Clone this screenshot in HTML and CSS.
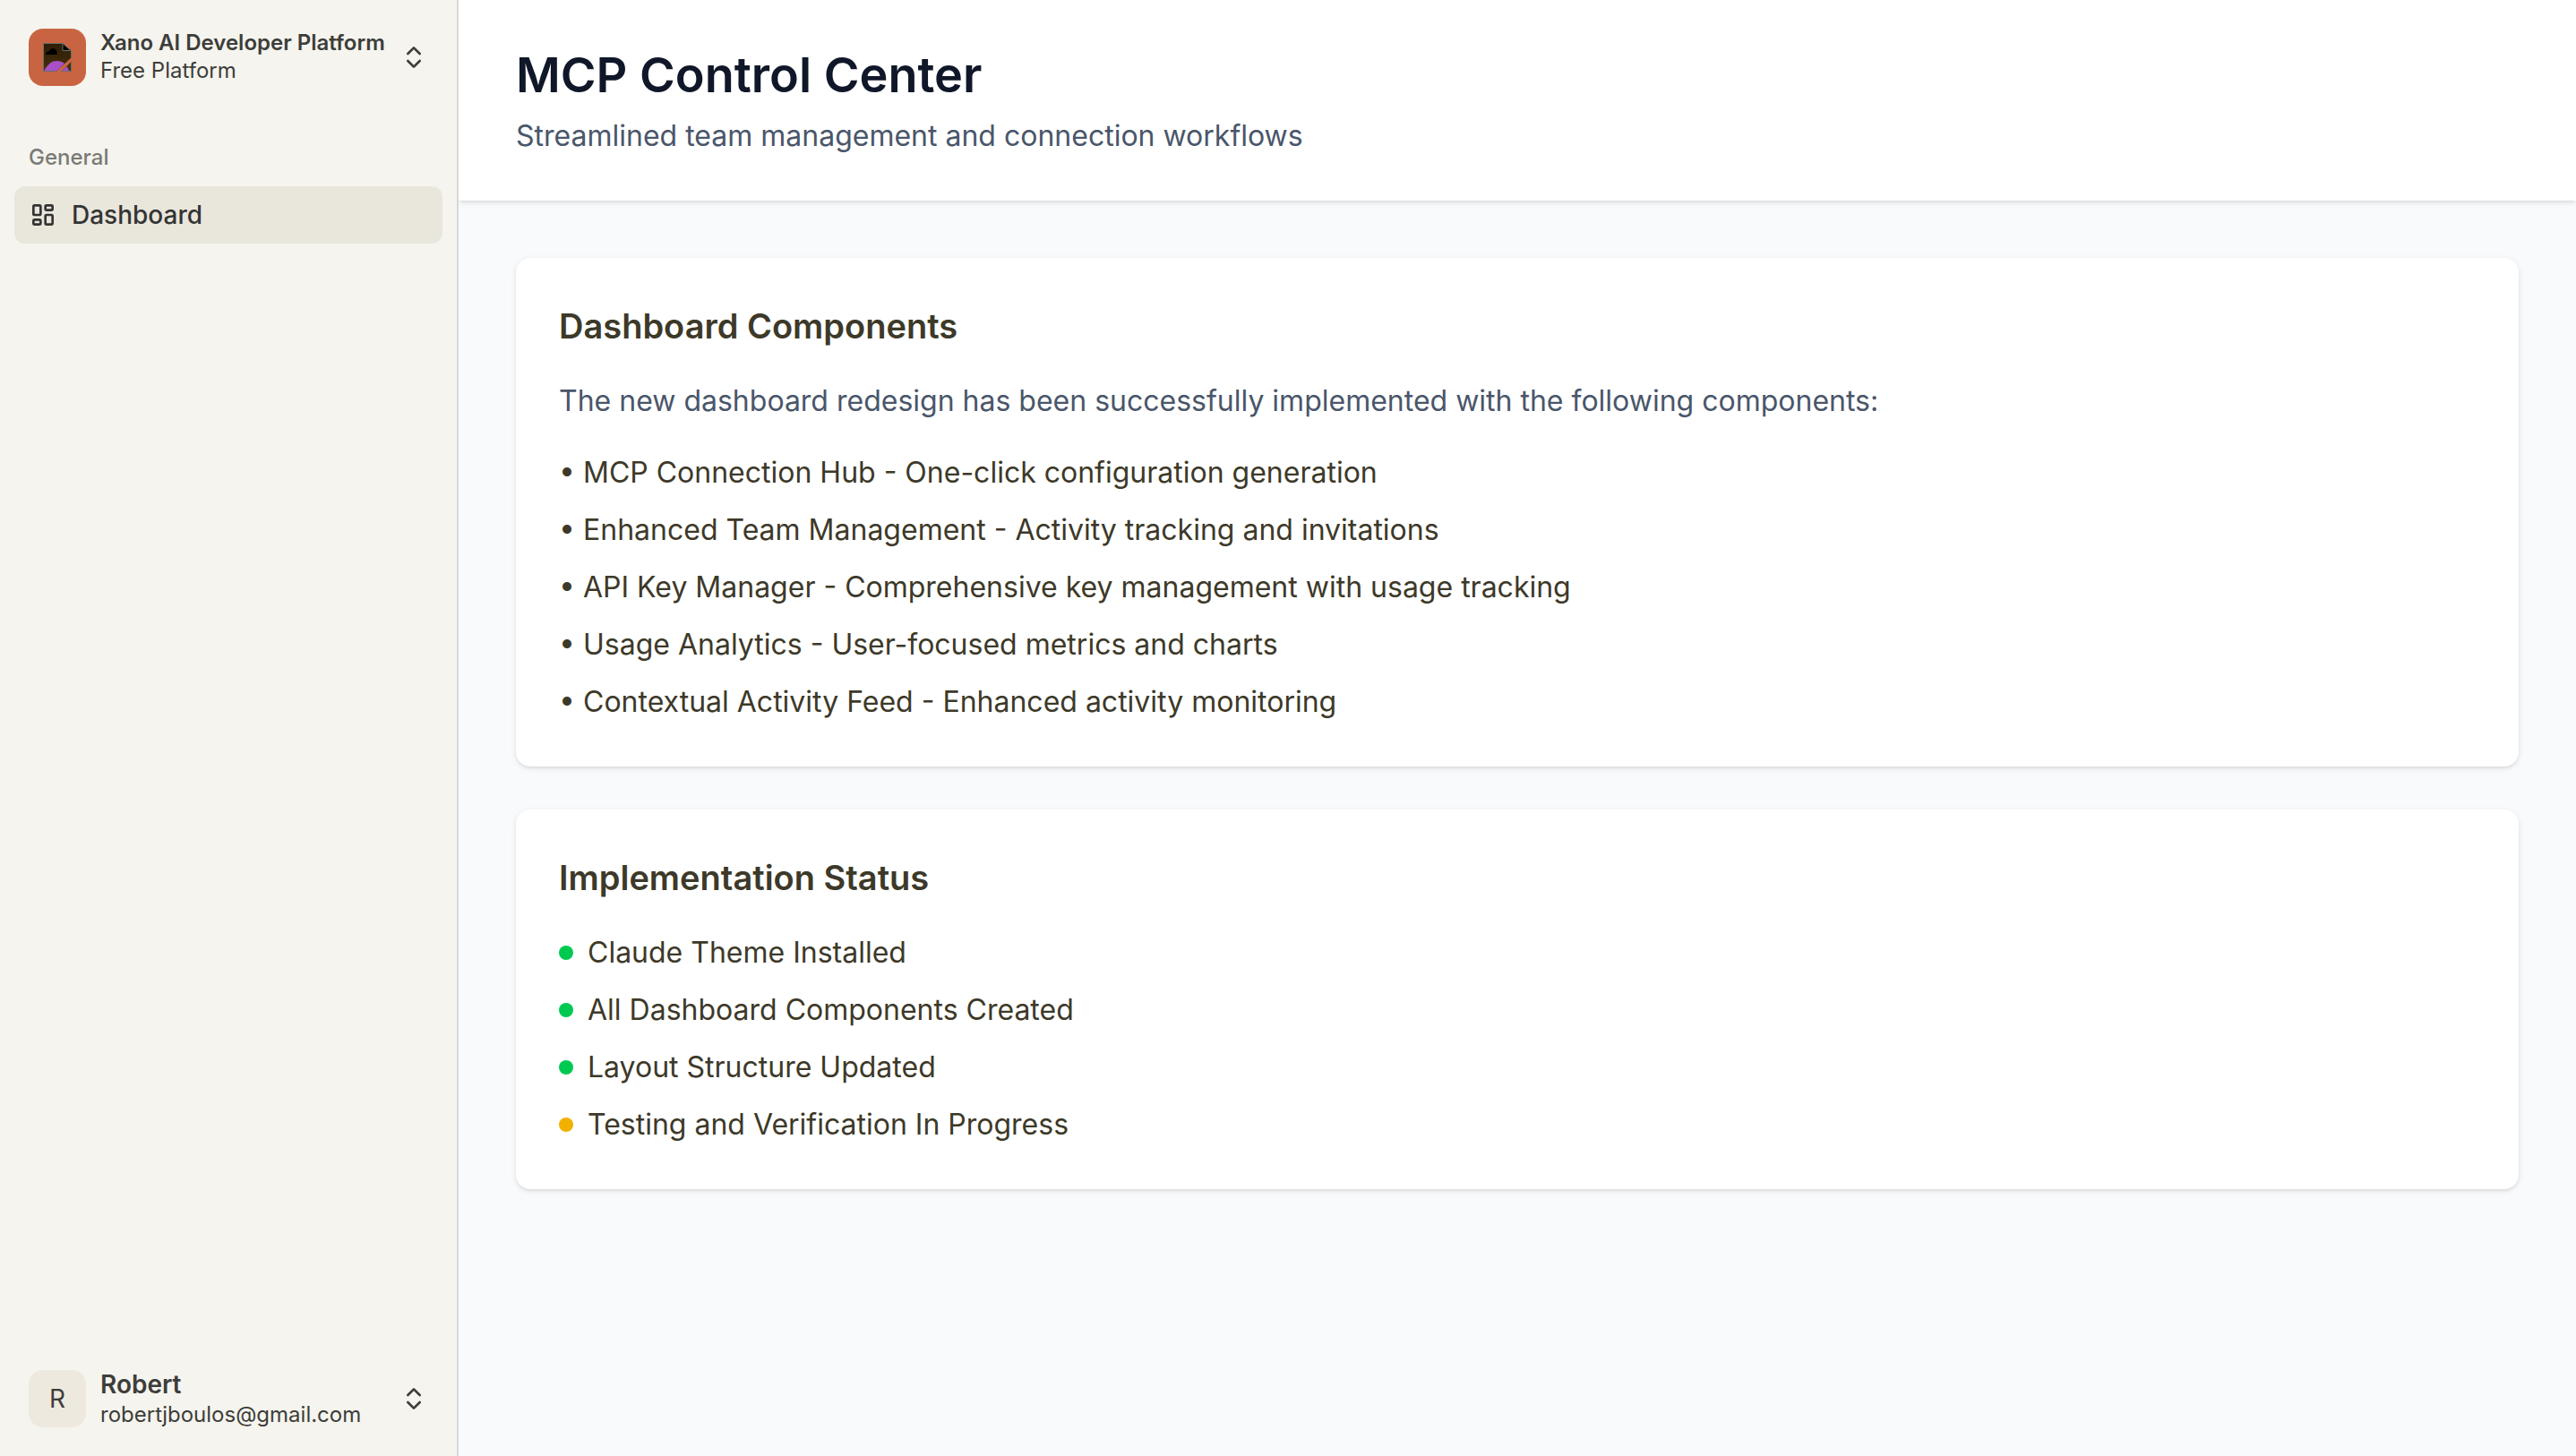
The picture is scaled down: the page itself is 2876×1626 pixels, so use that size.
FILE: index.html
```html
<!DOCTYPE html>
<html lang="en">
<head>
<meta charset="utf-8">
<title>MCP Control Center</title>
<meta name="viewport" content="width=device-width, initial-scale=1">
<link rel="stylesheet" href="styles.css">
</head>
<body>
<div class="app">
  <aside class="sidebar">
    <header class="sidebar-header">
      <button class="switcher" type="button">
        <span class="avatar avatar-brand">
          <svg class="brand-image" viewBox="0 0 32 32" aria-hidden="true">
            <defs>
              <linearGradient id="sky" x1="0" y1="0" x2="0" y2="1">
                <stop offset="0" stop-color="#2d1d05"/>
                <stop offset="1" stop-color="#46300c"/>
              </linearGradient>
            </defs>
            <path d="M.5.5h21l10 8.500v7.500L15 31.500H.5z" fill="url(#sky)"/>
            <path d="M3 13c0-3 2-4 4-4 1-4 7-4 8 0 1 0 1 2 1 4z" fill="#000"/>
            <path d="M1 31C6 23 10 20 15 20c4 0 7 1 9 3l-9 8.500z" fill="#a94fc9"/>
            <path d="M31.500 21v10.500h-11z" fill="#46300c"/>
            <path d="M26.500 26l3 5.500h-9z" fill="#a94fc9"/>
            <path d="M22 .5v8h9.500z" fill="#000"/>
            <path d="M14 31.500H.5V.5h21.500l9.500 8.500v8M22 .5v8h9.500M31.500 22v9.500H20" fill="none" stroke="#66706a"/>
          </svg>
        </span>
        <span class="identity">
          <span class="identity-team">Xano AI Developer Platform</span>
          <span class="identity-detail">Free Platform</span>
        </span>
        <svg class="icon" viewBox="0 0 24 24" aria-hidden="true"><path d="m7 15 5 5 5-5"/><path d="m7 9 5-5 5 5"/></svg>
      </button>
    </header>
    <nav class="nav" aria-labelledby="nav-general">
      <h2 class="nav-label" id="nav-general">General</h2>
      <a class="nav-link" href="#" aria-current="page">
        <svg class="icon" viewBox="0 0 24 24" aria-hidden="true">
          <rect x="4" y="4" width="6" height="8" rx="1"/>
          <rect x="4" y="16" width="6" height="4" rx="1"/>
          <rect x="14" y="12" width="6" height="8" rx="1"/>
          <rect x="14" y="4" width="6" height="4" rx="1"/>
        </svg>
        Dashboard
      </a>
    </nav>
    <footer class="sidebar-footer">
      <button class="switcher" type="button">
        <span class="avatar avatar-user">R</span>
        <span class="identity">
          <span class="identity-name">Robert</span>
          <span class="identity-detail">robertjboulos@gmail.com</span>
        </span>
        <svg class="icon" viewBox="0 0 24 24" aria-hidden="true"><path d="m7 15 5 5 5-5"/><path d="m7 9 5-5 5 5"/></svg>
      </button>
    </footer>
  </aside>
  <main class="main">
    <header class="page-header">
      <h1 class="page-title">MCP Control Center</h1>
      <p class="page-subtitle">Streamlined team management and connection workflows</p>
    </header>
    <div class="content">
      <section class="card">
        <h2 class="card-title">Dashboard Components</h2>
        <p class="card-intro">The new dashboard redesign has been successfully implemented with the following components:</p>
        <ul class="list">
          <li>• MCP Connection Hub - One-click configuration generation</li>
          <li>• Enhanced Team Management - Activity tracking and invitations</li>
          <li>• API Key Manager - Comprehensive key management with usage tracking</li>
          <li>• Usage Analytics - User-focused metrics and charts</li>
          <li>• Contextual Activity Feed - Enhanced activity monitoring</li>
        </ul>
      </section>
      <section class="card">
        <h2 class="card-title">Implementation Status</h2>
        <ul class="list">
          <li class="status">Claude Theme Installed</li>
          <li class="status">All Dashboard Components Created</li>
          <li class="status">Layout Structure Updated</li>
          <li class="status status-pending">Testing and Verification In Progress</li>
        </ul>
      </section>
    </div>
  </main>
</div>
</body>
</html>
```

FILE: styles.css
```css
*, *::before, *::after {
  box-sizing: border-box;
}

body, h1, h2, p, ul {
  margin: 0;
  padding: 0;
}

body {
  font-family: Inter, "Liberation Sans", sans-serif;
  font-size: 32px;
  line-height: 48px;
  color: #3d3929;
  background: #f8fafc;
}

.app {
  display: grid;
  grid-template-columns: 512px 1fr;
  min-height: 100vh;
}

.sidebar {
  position: sticky;
  top: 0;
  height: 100vh;
  display: flex;
  flex-direction: column;
  color: #3d3d3a;
  background: #f5f4ee;
  border-right: 2px solid #dad9d4;
}

.sidebar-header,
.sidebar-footer,
.nav {
  padding: 16px;
}

.nav {
  flex: 1;
}

.switcher {
  display: flex;
  align-items: center;
  gap: 16px;
  width: 100%;
  height: 96px;
  padding: 16px;
  border: 0;
  border-radius: 12px;
  background: none;
  color: inherit;
  font: inherit;
  text-align: left;
  cursor: pointer;
}

.avatar {
  flex: none;
  display: grid;
  place-items: center;
  width: 64px;
  height: 64px;
  border-radius: 16px;
  font-size: 28px;
}

.avatar-brand {
  background: #c96442;
}

.avatar-user {
  background: #ede9de;
}

.brand-image {
  width: 32px;
  height: 32px;
}

.identity {
  flex: 1;
  min-width: 0;
  display: flex;
  flex-direction: column;
  white-space: nowrap;
}

.identity-team {
  font-size: 24px;
  line-height: 30px;
  font-weight: 600;
}

.identity-name {
  font-size: 28px;
  line-height: 36px;
  font-weight: 600;
}

.identity-detail {
  font-size: 24px;
  line-height: 32px;
}

.icon {
  flex: none;
  width: 32px;
  height: 32px;
  fill: none;
  stroke: currentColor;
  stroke-width: 2;
  stroke-linecap: round;
  stroke-linejoin: round;
}

.nav-label {
  padding: 0 16px;
  font-size: 24px;
  line-height: 64px;
  font-weight: 500;
  color: #7a7a76;
}

.nav-link {
  display: flex;
  align-items: center;
  gap: 16px;
  height: 64px;
  padding: 0 16px;
  border-radius: 12px;
  background: #e9e6dc;
  color: #343434;
  font-size: 28px;
  font-weight: 500;
  text-decoration: none;
}

.page-header {
  display: flex;
  flex-direction: column;
  gap: 8px;
  padding: 48px 64px;
  background: #fff;
  box-shadow: 0 2px 6px rgb(0 0 0 / 10%), 0 2px 4px -2px rgb(0 0 0 / 10%);
}

.page-title {
  font-size: 54px;
  line-height: 72px;
  font-weight: 600;
  color: #101729;
}

.page-subtitle,
.card-intro {
  color: #4a566a;
}

.content {
  display: flex;
  flex-direction: column;
  gap: 48px;
  padding: 64px;
}

.card {
  display: flex;
  flex-direction: column;
  gap: 32px;
  padding: 48px;
  border-radius: 16px;
  background: #fff;
  box-shadow: 0 2px 6px rgb(0 0 0 / 10%), 0 2px 4px -2px rgb(0 0 0 / 10%);
}

.card-title {
  font-size: 38px;
  line-height: 56px;
  font-weight: 600;
}

.list {
  display: flex;
  flex-direction: column;
  gap: 16px;
  list-style: none;
}

.status {
  display: flex;
  align-items: center;
  gap: 16px;
}

.status::before {
  content: "";
  width: 16px;
  height: 16px;
  border-radius: 50%;
  background: #00c951;
}

.status-pending::before {
  background: #f0b100;
}
```
